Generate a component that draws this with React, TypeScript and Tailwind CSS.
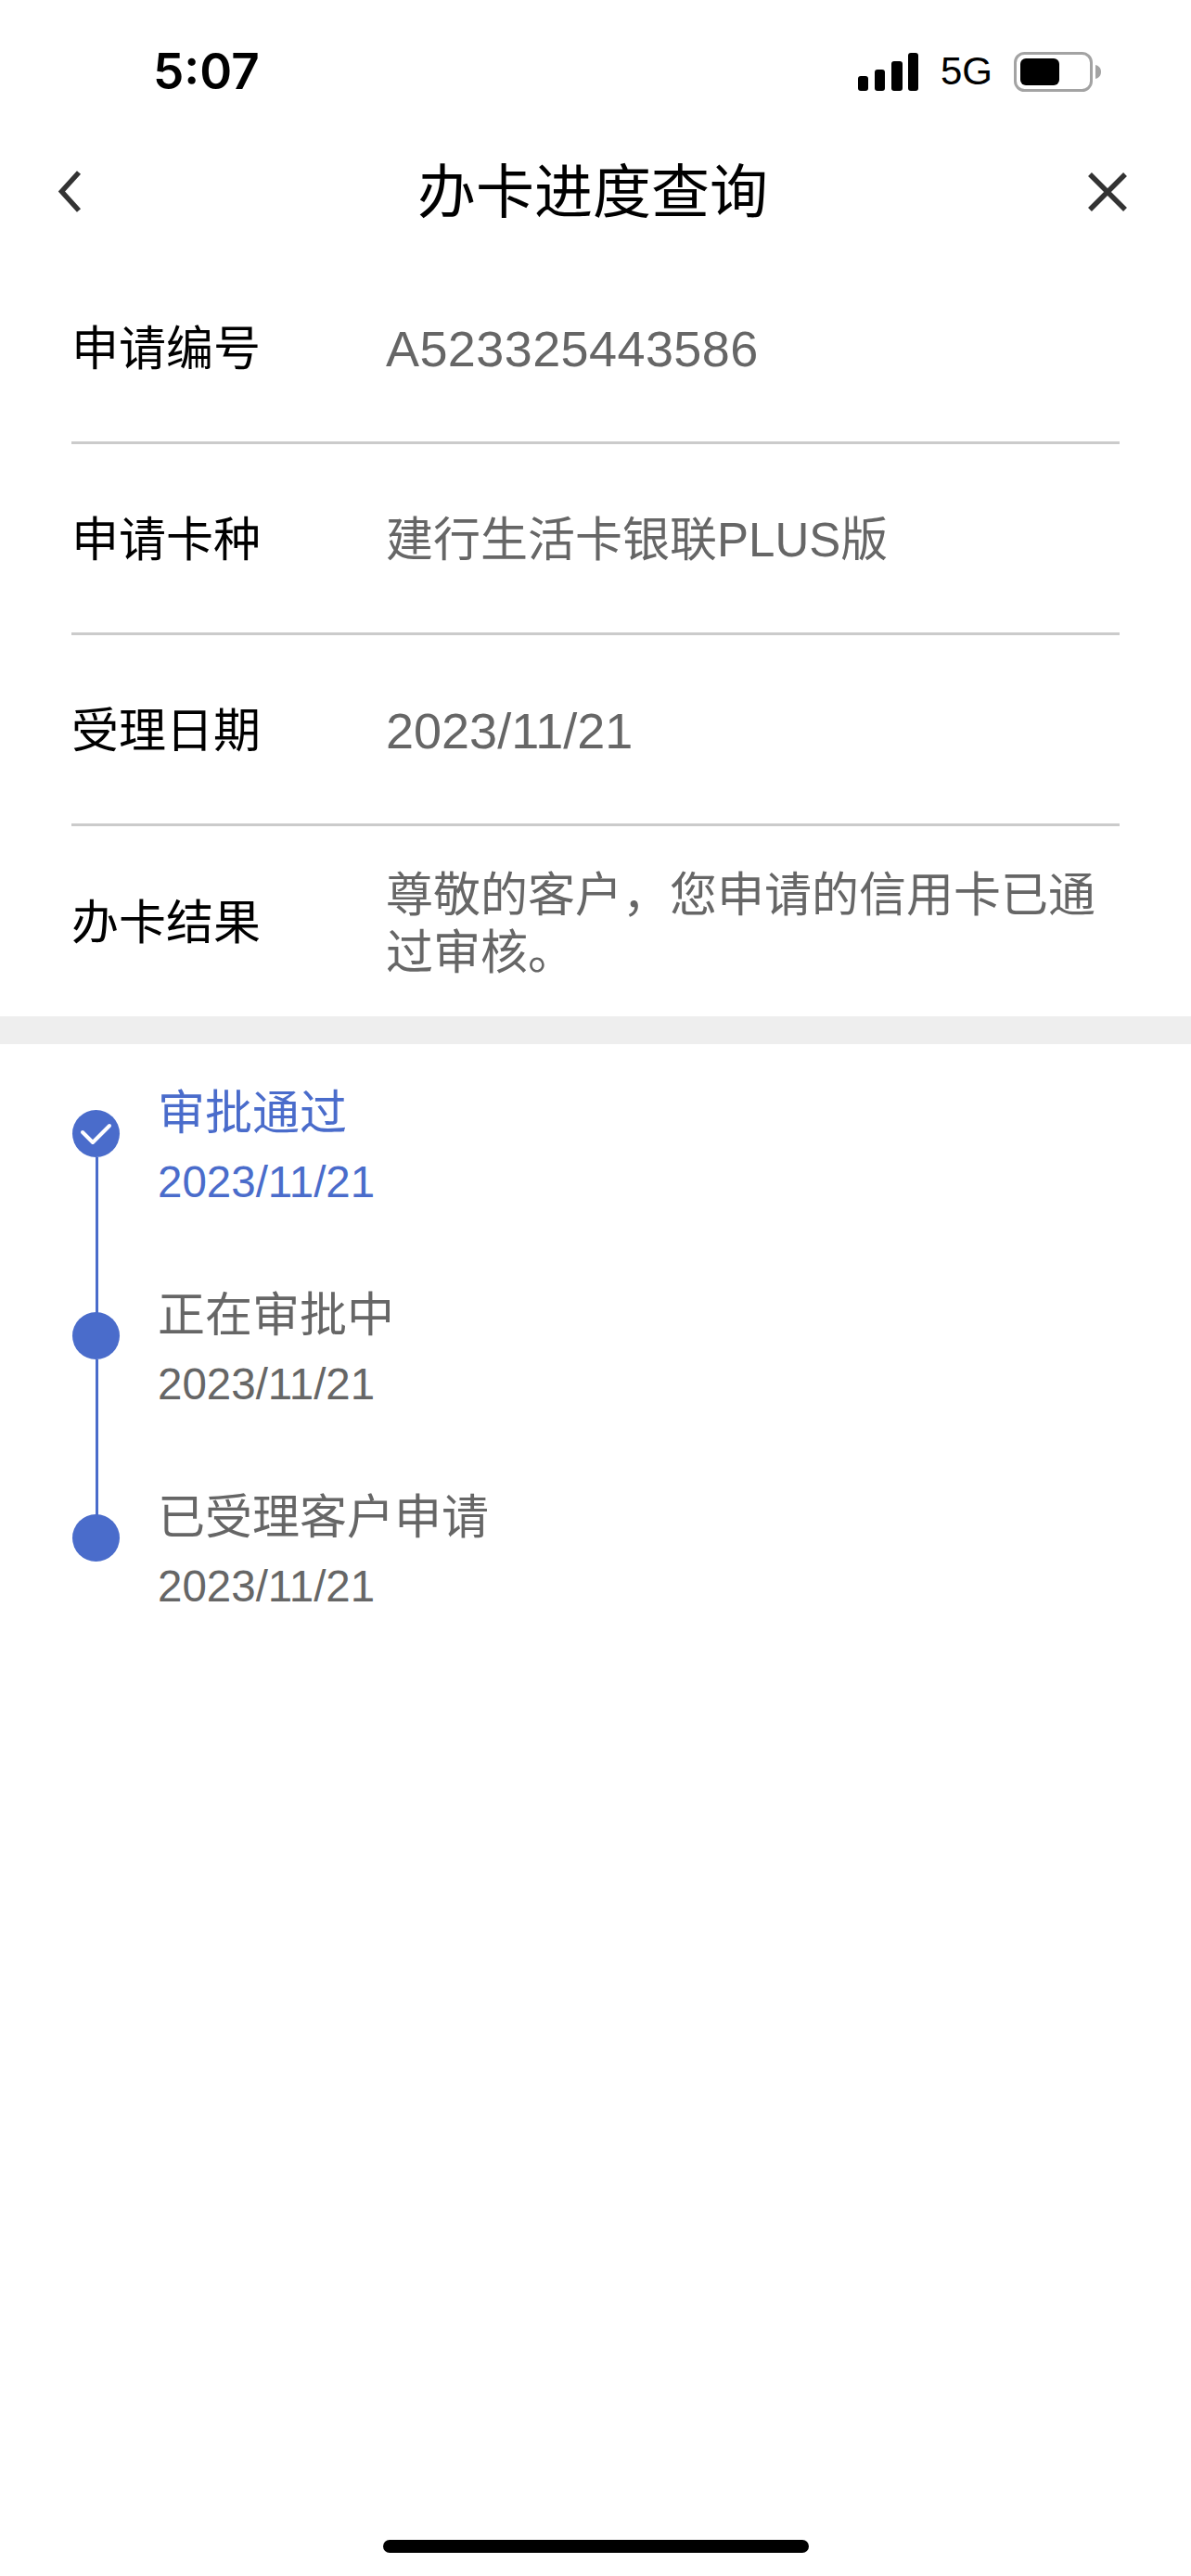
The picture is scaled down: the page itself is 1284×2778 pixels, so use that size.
const ROWS = [
  { label: "申请编号", value: "A523325443586", size: "text-[54px] tracking-[0.4px] -mt-[3px]" },
  { label: "申请卡种", value: "建行生活卡银联PLUS版", size: "text-[51px]" },
  { label: "受理日期", value: "2023/11/21", size: "text-[54px] -mt-[3px]" },
];

const STEPS = [
  { title: "审批通过", date: "2023/11/21", active: true },
  { title: "正在审批中", date: "2023/11/21" },
  { title: "已受理客户申请", date: "2023/11/21", last: true },
];

function StatusBar() {
  return (
    <div className="h-[151px] flex items-start justify-between pt-[52px] pl-[165px] pr-[97px] text-black">
      <span className="text-[53px] leading-[50px] font-semibold" style={{ fontFamily: '"Inter", sans-serif' }}>
        5:07
      </span>
      <div className="flex items-center h-[50px]">
        <svg width="65" height="41" viewBox="0 0 65 41" fill="#000">
          <rect x="0" y="25" width="11" height="16" rx="3" />
          <rect x="18" y="18" width="11" height="23" rx="3" />
          <rect x="36" y="9" width="12" height="32" rx="3" />
          <rect x="54" y="0" width="11" height="41" rx="3" />
        </svg>
        <span className="ml-[24px] text-[42px] leading-[50px]">5G</span>
        <svg width="94" height="43" viewBox="0 0 94 43" className="ml-[23px]">
          <rect x="1.5" y="1.5" width="82" height="40" rx="10" fill="none" stroke="#a3a3a3" strokeWidth="3" />
          <rect x="7" y="7" width="42" height="29" rx="6" fill="#000" />
          <path d="M88 14c4 1 6 4 6 7.500s-2 6.500-6 7.500z" fill="#a3a3a3" />
        </svg>
      </div>
    </div>
  );
}

function NavBar() {
  return (
    <div className="h-[122px] pb-[2px] -mt-[4px] mb-[4px] flex items-center justify-between pl-[62px] pr-[68px]">
      <div className="w-[44px]">
        <svg width="28" height="46" viewBox="0 0 28 46" fill="none" stroke="#333" strokeWidth="5.500">
          <path d="M23 2 4.500 22.500 23 43" />
        </svg>
      </div>
      <h1 className="text-[63px] leading-none text-black">办卡进度查询</h1>
      <svg width="44" height="44" viewBox="0 0 44 44" fill="none" stroke="#333" strokeWidth="5.500">
        <path d="M3 3l38 38M41 3 3 41" />
      </svg>
    </div>
  );
}

export default function App() {
  return (
    <div
      className="w-[1284px] h-[2778px] bg-white flex flex-col overflow-hidden"
      style={{ fontFamily: '"Liberation Sans", "Noto Sans CJK SC", sans-serif' }}
    >
      <StatusBar />
      <NavBar />
      <div className="px-[77px]">
        {ROWS.map((row) => (
          <div key={row.label} className="h-[206px] pt-[6px] flex items-center border-b-[3px] border-[#cbcbcb]">
            <span className="w-[339px] text-[51px] text-black">{row.label}</span>
            <span className={`${row.size} text-[#666]`}>{row.value}</span>
          </div>
        ))}
        <div className="h-[205px] pt-[6px] flex items-center">
          <span className="w-[339px] text-[51px] text-black">办卡结果</span>
          <p className="flex-1 text-[51px] leading-[62px] text-[#666]">尊敬的客户，您申请的信用卡已通过审核。</p>
        </div>
      </div>
      <div className="h-[30px] bg-[#eee]" />
      <div className="pl-[78px] pt-[40px]">
        {STEPS.map((step) => (
          <div key={step.title} className="relative h-[218px] flex gap-[41px]">
            <div className="w-[51px] h-[51px] mt-[31px] rounded-full bg-[#4a6ccb]">
              {step.active && (
                <svg width="51" height="51" viewBox="0 0 51 51" fill="none" stroke="#fff" strokeWidth="4" strokeLinecap="round" strokeLinejoin="round">
                  <path d="M11 24l11 11 18-18" />
                </svg>
              )}
            </div>
            {!step.last && <div className="absolute left-[25px] top-[82px] w-[3px] h-[168px] bg-[#4a6ccb]" />}
            <div className={`pt-[4px] ${step.active ? "text-[#4a6ccb]" : "text-[#666]"}`}>
              <div className="text-[51px] leading-[62px]">{step.title}</div>
              <div className="text-[47.5px] leading-[52px] mt-[17px]">{step.date}</div>
            </div>
          </div>
        ))}
      </div>
      <div className="mt-auto mb-[25px] mx-auto w-[459px] h-[14px] rounded-full bg-black" />
    </div>
  );
}
